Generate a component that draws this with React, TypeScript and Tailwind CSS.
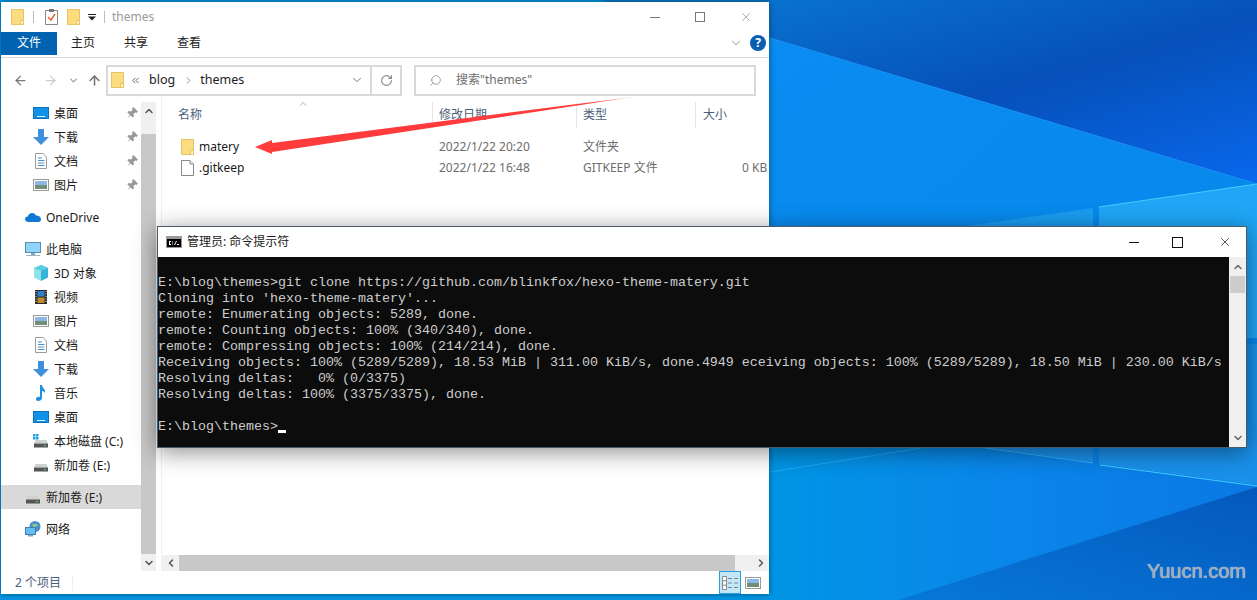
import { ArrowLeft, ArrowRight, ArrowUp, ChevronDown, ChevronLeft, ChevronRight, ChevronUp, ChevronsLeft, Pin, RotateCw, Search, X } from "lucide-react";
import type { ReactNode } from "react";

const FolderIcon = () => (
  <svg width="13" height="16" viewBox="0 0 13 16" className="shrink-0">
    <path d="M0.5 0.5H12.5V15.5H0.5Z" fill="#fbdc7e" stroke="#e5c365" />
    <path d="M9.5 11.5H12.5V15.5H9.5Z" fill="#fff3c4" stroke="#e5c365" />
  </svg>
);

const FileIcon = () => (
  <svg width="13" height="16" viewBox="0 0 13 16" className="shrink-0">
    <path d="M0.5 0.5H9L12.5 4V15.5H0.5Z" fill="#fff" stroke="#8a8a8a" />
    <path d="M9 0.5V4H12.5" fill="#eee" stroke="#8a8a8a" />
  </svg>
);

const DesktopIcon = () => (
  <svg width="16" height="16" viewBox="0 0 16 16">
    <rect x="0.5" y="2.5" width="15" height="11" fill="#0f93e8" stroke="#0f6fb8" />
    <rect x="4" y="11" width="8" height="1" fill="#d8f0ff" />
  </svg>
);

const DownloadIcon = () => (
  <svg width="16" height="16" viewBox="0 0 16 16">
    <path d="M5 0H11V8H16L8 16L0 8H5Z" fill="#3f8fdc" />
  </svg>
);

const DocIcon = () => (
  <svg width="16" height="16" viewBox="0 0 16 16">
    <path d="M2.5 0.5H10L13.5 4V15.5H2.5Z" fill="#fff" stroke="#999" />
    <path d="M5 5H9M5 7.5H11.5M5 10H11.5M5 12.5H11.5" stroke="#4a90c8" />
  </svg>
);

const PictureIcon = () => (
  <svg width="16" height="16" viewBox="0 0 16 16">
    <rect x="0.5" y="2.5" width="15" height="11" fill="#fff" stroke="#9a9a9a" />
    <rect x="2" y="4" width="12" height="4" fill="#8ab8e8" />
    <rect x="2" y="8" width="12" height="4" fill="#6f8f78" />
  </svg>
);

const CloudIcon = () => (
  <svg width="16" height="16" viewBox="0 0 16 16">
    <path d="M4 13C1 13 0 11.5 0 10C0 8.5 1 7.5 2.8 7.5C3.4 5.5 5 4 7.2 4C9 4 10.4 5 11 6.5C13.8 6.5 16 8 16 10.5C16 12 15 13 13.5 13Z" fill="#0f78d4" />
  </svg>
);

const PcIcon = () => (
  <svg width="16" height="16" viewBox="0 0 16 16">
    <rect x="0.5" y="1.5" width="15" height="10" fill="#8fd4f8" stroke="#5a8fb0" />
    <rect x="6" y="12" width="4" height="2" fill="#8aa8bc" />
    <rect x="1" y="14" width="14" height="1" fill="#9ab4c4" />
  </svg>
);

const CubeIcon = () => (
  <svg width="16" height="16" viewBox="0 0 16 16">
    <path d="M8 0L15 3V12.5L8 16Z" fill="#39b4d8" />
    <path d="M8 0L1 3V12.5L8 16Z" fill="#8fe4ec" />
    <path d="M8 0L15 3L8 6L1 3Z" fill="#5ccce0" />
  </svg>
);

const FilmIcon = () => (
  <svg width="16" height="16" viewBox="0 0 16 16">
    <rect x="2" y="1" width="12" height="14" fill="#2a2a2a" />
    <rect x="4.5" y="2" width="7" height="5.5" fill="#2f7fd0" />
    <rect x="4.5" y="8.5" width="7" height="5.5" fill="#c08a2f" />
    <path d="M3 2V14M13 2V14" stroke="#ddd" strokeDasharray="1 1.5" />
  </svg>
);

const MusicIcon = () => (
  <svg width="16" height="16" viewBox="0 0 16 16">
    <path d="M7 0H9C9 3 13 4 12 8C11 6.5 10 6 9 6V13C9 15 7 16 5 16C3.500 16 3 15 3 14C3 12.500 5 11.500 7 12Z" fill="#1f8fe0" />
  </svg>
);

const DriveIcon = ({ win = false }: { win?: boolean }) => (
  <svg width="16" height="16" viewBox="0 0 16 16">
    {win && <path d="M0 1H2.500V3.500H0ZM3 1H5.500V3.500H3ZM0 4H2.500V6.500H0ZM3 4H5.500V6.500H3Z" fill="#1ba1e2" />}
    <path d="M2.500 7H13.500L15 10.500H1Z" fill="#d0d0d0" />
    <rect x="1" y="10.500" width="14" height="4" fill="#555" />
    <rect x="11" y="12" width="2" height="1" fill="#4fe04f" />
  </svg>
);

const NetworkIcon = () => (
  <svg width="16" height="16" viewBox="0 0 16 16">
    <circle cx="10" cy="5.500" r="5.500" fill="#4a90c8" />
    <path d="M7 2.500C9 4 11 2 13 4C12 6 10 5 9 8Z" fill="#8fc88a" />
    <rect x="0.500" y="6.500" width="10" height="7" fill="#64bdf2" stroke="#3a7fb0" />
    <rect x="3" y="14" width="5" height="1.500" fill="#8aa8bc" />
  </svg>
);

const CmdIcon = () => (
  <svg width="16" height="12" viewBox="0 0 16 12" className="shrink-0">
    <rect x="0" y="0" width="16" height="12" fill="#9a9a9a" />
    <rect x="1" y="3" width="14" height="8" fill="#000" />
    <path d="M3 5H5V6H3ZM3 6H4V8H3ZM3 8H5V9H3ZM6 5.500H7V6.500H6ZM6 7.500H7V8.500H6ZM8 9L10 5H11L9 9ZM11 8H13V9H11Z" fill="#fff" />
  </svg>
);

const navGroups: { label: string; icon: ReactNode; indent: number; pin?: boolean; selected?: boolean }[][] = [
  [
    { label: "桌面", icon: <DesktopIcon />, indent: 32, pin: true },
    { label: "下载", icon: <DownloadIcon />, indent: 32, pin: true },
    { label: "文档", icon: <DocIcon />, indent: 32, pin: true },
    { label: "图片", icon: <PictureIcon />, indent: 32, pin: true },
  ],
  [{ label: "OneDrive", icon: <CloudIcon />, indent: 24 }],
  [
    { label: "此电脑", icon: <PcIcon />, indent: 24 },
    { label: "3D 对象", icon: <CubeIcon />, indent: 32 },
    { label: "视频", icon: <FilmIcon />, indent: 32 },
    { label: "图片", icon: <PictureIcon />, indent: 32 },
    { label: "文档", icon: <DocIcon />, indent: 32 },
    { label: "下载", icon: <DownloadIcon />, indent: 32 },
    { label: "音乐", icon: <MusicIcon />, indent: 32 },
    { label: "桌面", icon: <DesktopIcon />, indent: 32 },
    { label: "本地磁盘 (C:)", icon: <DriveIcon win />, indent: 32 },
    { label: "新加卷 (E:)", icon: <DriveIcon />, indent: 32 },
  ],
  [{ label: "新加卷 (E:)", icon: <DriveIcon />, indent: 24, selected: true }],
  [{ label: "网络", icon: <NetworkIcon />, indent: 24 }],
];

const consoleLines = [
  "E:\\blog\\themes>git clone https://github.com/blinkfox/hexo-theme-matery.git",
  "Cloning into 'hexo-theme-matery'...",
  "remote: Enumerating objects: 5289, done.",
  "remote: Counting objects: 100% (340/340), done.",
  "remote: Compressing objects: 100% (214/214), done.",
  "Receiving objects: 100% (5289/5289), 18.53 MiB | 311.00 KiB/s, done.4949 eceiving objects: 100% (5289/5289), 18.50 MiB | 230.00 KiB/s",
  "Resolving deltas:   0% (0/3375)",
  "Resolving deltas: 100% (3375/3375), done.",
  "",
];

const Wallpaper = () => (
  <svg className="absolute inset-0" width="1257" height="600" viewBox="0 0 1257 600">
    <defs>
      <linearGradient id="base" x1="0" y1="0" x2="1" y2="0">
        <stop offset="0.6" stopColor="#0096e4" />
        <stop offset="0.8" stopColor="#0a86ea" />
        <stop offset="1" stopColor="#0a78e4" />
      </linearGradient>
      <linearGradient id="sky" x1="0" y1="0" x2="1" y2="1">
        <stop offset="0" stopColor="#0a7cd4" />
        <stop offset="0.55" stopColor="#0650ba" />
        <stop offset="1" stopColor="#0968ec" />
      </linearGradient>
      <linearGradient id="floor" x1="0" y1="1" x2="1" y2="0">
        <stop offset="0" stopColor="#0678d8" />
        <stop offset="1" stopColor="#0558bc" />
      </linearGradient>
      <linearGradient id="mid" x1="0" y1="0" x2="1" y2="1">
        <stop offset="0" stopColor="#0a8cf2" />
        <stop offset="1" stopColor="#0686e8" />
      </linearGradient>
    </defs>
    <rect width="1257" height="600" fill="url(#base)" />
    <path d="M770 38L1257 184V480L1000 445H770Z" fill="url(#mid)" />
    <path d="M600 0H1257V184L770 38L600 0Z" fill="url(#sky)" />
    <path d="M0 0H770V38L600 0Z" fill="#0a78c8" />
    <path d="M967 226L1093 208V230H967Z" fill="#1a9cf0" />
    <path d="M1099 207L1257 184V338H1099Z" fill="#1fa6f6" />
    <path d="M1099 344H1257V485L1099 464Z" fill="#1a90ea" />
    <path d="M985 448H1093V462Z" fill="#1a90ea" />
    <path d="M1257 487V600H898Z" fill="url(#floor)" />
    <path d="M770 38L1257 184" stroke="#1a92f4" strokeWidth="1" />
    <path d="M1099 207L1257 184" stroke="#40d0ff" strokeWidth="1" />
    <path d="M1100 465L1257 486" stroke="#40d0ff" strokeWidth="1" />
    <path d="M985 448L1093 463" stroke="#30b0f8" />
    <path d="M770 472L921 448" stroke="#20a8f0" />
  </svg>
);

const Arrows = () => (
  <svg className="absolute inset-0 pointer-events-none" width="1257" height="600" viewBox="0 0 1257 600">
    <defs>
      <linearGradient id="fade1" x1="255" y1="0" x2="640" y2="0" gradientUnits="userSpaceOnUse">
        <stop offset="0.85" stopColor="#ff3b3b" />
        <stop offset="1" stopColor="#ff3b3b" stopOpacity="0.15" />
      </linearGradient>
      <linearGradient id="fade2" x1="784" y1="0" x2="1020" y2="0" gradientUnits="userSpaceOnUse">
        <stop offset="0.7" stopColor="#ff3b3b" />
        <stop offset="1" stopColor="#ff3b3b" stopOpacity="0.15" />
      </linearGradient>
    </defs>
    <path d="M255 147L272 140L272 143L640 96L272 152L272 154Z" fill="url(#fade1)" />
    <path d="M784 286L801 278L801 282L1020 296L801 291L801 294Z" fill="url(#fade2)" />
  </svg>
);

const App = () => {
  return (
    <div className="relative w-[1257px] h-[600px] overflow-hidden font-['Noto_Sans','Noto_Sans_CJK_SC',sans-serif] text-[12px]">
      <Wallpaper />

      {/* Explorer window */}
      <div className="absolute left-[1px] top-[2px] w-[768px] h-[592px] flex flex-col bg-white shadow-[0_0_6px_rgba(0,0,0,0.45)]">
        <div className="flex items-center h-[30px] shrink-0 pl-[10px]">
          <FolderIcon />
          <div className="w-px h-3 bg-[#bbb] ml-[9px] mr-[11px]" />
          <svg width="13" height="16" viewBox="0 0 13 16">
            <path d="M0.500 1.500H12.500V15.500H0.500Z" fill="#fff" stroke="#888" />
            <rect x="4" y="0" width="5" height="3" fill="#777" />
            <path d="M3 8L6 11L10 5" fill="none" stroke="#e8602c" strokeWidth="1.500" />
          </svg>
          <div className="ml-[9px]"><FolderIcon /></div>
          <svg width="9" height="7" viewBox="0 0 9 7" className="ml-[8px]">
            <path d="M0 0H8V1H0ZM0 2.500H8L4 6.500Z" fill="#222" />
          </svg>
          <div className="w-px h-3 bg-[#bbb] ml-[7px] mr-[7px]" />
          <span className="text-[#999]">themes</span>
          <div className="ml-auto flex items-center">
            <div className="w-[10px] h-px bg-[#777] mr-[35px]" />
            <div className="w-[10px] h-[10px] border border-[#777] mr-[34px]" />
            <X size={14} strokeWidth={1} className="mr-[16px] text-[#777]" />
          </div>
        </div>

        <div className="flex items-center h-[26px] shrink-0 border-b border-[#d9d9d9] pb-[3px]">
          <div className="w-[56px] h-[23px] flex items-center justify-center bg-[#0063b1] text-white">文件</div>
          <span className="ml-[14px] text-[#222]">主页</span>
          <span className="ml-[29px] text-[#222]">共享</span>
          <span className="ml-[29px] text-[#222]">查看</span>
          <ChevronDown size={14} strokeWidth={1.500} className="ml-auto mr-[7px] text-[#888]" />
          <div className="w-[16px] h-[16px] mr-[3px] rounded-full bg-[#0a5fb0] text-white flex items-center justify-center text-[12px] font-bold">?</div>
        </div>

        <div className="flex items-center h-[38px] shrink-0 pt-[6px]">
          <ArrowLeft size={15} strokeWidth={2} className="ml-[12px] text-[#777]" />
          <ArrowRight size={15} strokeWidth={2} className="ml-[15px] text-[#ccc]" />
          <ChevronDown size={11} strokeWidth={2.500} className="ml-[10px] text-[#999]" />
          <ArrowUp size={15} strokeWidth={2.500} className="ml-[8px] text-[#777]" />
          <div className="ml-[4px] w-[296px] h-[31px] flex items-center border-2 border-[#d9d9d9] text-[#222] pl-[3px]">
            <FolderIcon />
            <ChevronsLeft size={11} strokeWidth={1.500} className="ml-[6px]" />
            <span className="ml-[8px] text-[12.500px]">blog</span>
            <ChevronRight size={11} strokeWidth={2} className="ml-[8px] text-[#888]" />
            <span className="ml-[6px] text-[12.500px]">themes</span>
            <ChevronDown size={14} strokeWidth={1.500} className="ml-[106px] text-[#666]" />
            <div className="ml-[6px] h-full border-l-2 border-[#d9d9d9] flex-1 flex items-center justify-center">
              <RotateCw size={13} className="text-[#888]" />
            </div>
          </div>
          <div className="ml-[12px] w-[342px] h-[31px] flex items-center border-2 border-[#d9d9d9] text-[#6d6d6d] pl-[13px]">
            <Search size={13} strokeWidth={1.300} className="-scale-x-100 text-[#8a7a8a]" />
            <span className="ml-[14px]">搜索"themes"</span>
          </div>
        </div>

        <div className="flex flex-1 min-h-0">
          <div className="w-[140px] shrink-0 flex flex-col gap-2 pt-[5px] text-[#1a1a1a]">
            {navGroups.map((group, i) => (
              <div key={i} className="flex flex-col">
                {group.map((item, j) => (
                  <div key={j} className={`flex items-center h-6 ${item.selected ? "bg-[#d9d9d9]" : ""}`} style={{ paddingLeft: item.indent }}>
                    {item.icon}
                    <span className="ml-[5px] translate-y-px">{item.label}</span>
                    {item.pin && <Pin size={12} fill="#999" strokeWidth={1.500} className="ml-auto mr-[3px] rotate-45 text-[#999]" />}
                  </div>
                ))}
              </div>
            ))}
          </div>

          <div className="w-[15px] shrink-0 mt-[6px] flex flex-col bg-[#f0f0f0]">
            <div className="h-[32px] flex items-start justify-center pt-[3px]">
              <ChevronUp size={12} strokeWidth={3} className="text-[#555]" />
            </div>
            <div className="flex-1 bg-[#c8c8c8]" />
            <div className="h-[17px] flex items-center justify-center">
              <ChevronDown size={12} strokeWidth={3} className="text-[#555]" />
            </div>
          </div>

          <div className="flex-1 min-w-0 ml-[5px] flex flex-col border-l border-[#f0f0f0]">
            <div className="relative flex h-[26px] mt-[6px] shrink-0 text-[#4c607a]">
              <ChevronUp size={12} strokeWidth={1} className="absolute left-[135px] -top-[4px] text-[#666]" />
              <div className="w-[270px] flex items-center pl-[16px]">名称</div>
              <div className="w-[144px] flex items-center pl-[6px] border-l border-[#e5e5e5]">修改日期</div>
              <div className="w-[119px] flex items-center pl-[6px] border-l border-[#e5e5e5]">类型</div>
              <div className="flex-1 flex items-center pl-[7px] border-l border-[#e5e5e5]">大小</div>
            </div>
            <div className="flex flex-col mt-2 flex-1 text-[#6d6d6d] overflow-hidden">
              <div className="flex items-center h-[21px] whitespace-nowrap">
                <div className="w-[270px] flex items-center pl-[19px] text-[#1a1a1a] gap-[5px]"><FolderIcon />matery</div>
                <div className="w-[144px] pl-[7px]">2022/1/22 20:20</div>
                <div className="w-[119px] pl-[7px]">文件夹</div>
              </div>
              <div className="flex items-center h-[21px] whitespace-nowrap">
                <div className="w-[270px] flex items-center pl-[19px] text-[#1a1a1a] gap-[5px]"><FileIcon />.gitkeep</div>
                <div className="w-[144px] pl-[7px]">2022/1/22 16:48</div>
                <div className="w-[119px] pl-[7px]">GITKEEP 文件</div>
                <div className="flex-1 min-w-0 overflow-hidden pl-[47px]">0 KB</div>
              </div>
            </div>
            <div className="flex h-4 shrink-0 bg-[#f0f0f0]">
              <div className="w-[17px] flex items-center justify-center"><ChevronLeft size={12} strokeWidth={3} className="text-[#555]" /></div>
              <div className="flex-1 bg-[#c8c8c8]" />
              <div className="w-[34px] flex items-center justify-end pr-[2px]"><ChevronRight size={12} strokeWidth={3} className="text-[#555]" /></div>
            </div>
          </div>
        </div>

        <div className="flex items-center h-[23px] shrink-0 pl-[14px] text-[#4c607a]">
          <span>2 个项目</span>
          <div className="w-px h-4 bg-[#eee] ml-[11px]" />
          <div className="ml-auto w-[22px] h-full flex items-center justify-center bg-[#c5e6f7] border border-[#27a0dc]">
            <svg width="16" height="14" viewBox="0 0 16 14">
              <path d="M0.500 0.500H4.500V13.500H0.500ZM0.500 4.800H4.500M0.500 9.200H4.500" fill="#fff" stroke="#888" />
              <path d="M6 2.500H10M12 2.500H16M6 7H10M12 7H16M6 11.500H10M12 11.500H16" stroke="#7a8a98" />
            </svg>
          </div>
          <div className="ml-[4px] mr-[8px]"><PictureIcon /></div>
        </div>
      </div>

      <Arrows />

      {/* Console window */}
      <div className="absolute left-[157px] top-[226px] w-[1090px] h-[222px] flex flex-col bg-white border border-[#4a5a68] shadow-[0_4px_22px_rgba(0,0,0,0.45)]">
        <div className="flex items-center h-[30px] shrink-0 pl-[8px] text-[#1a1a1a]">
          <CmdIcon />
          <span className="ml-[5px]">管理员: 命令提示符</span>
          <div className="ml-auto flex items-center">
            <div className="w-[10px] h-px bg-[#111] mr-[33px]" />
            <div className="w-[11px] h-[11px] border border-[#111] mr-[35px]" />
            <X size={14} strokeWidth={1.200} className="mr-[14px] text-[#111]" />
          </div>
        </div>
        <div className="flex flex-1 min-h-0">
          <div className="flex-1 min-w-0 bg-[#0c0c0c] text-[#cccccc] pt-[18px] overflow-hidden whitespace-pre font-['Liberation_Mono','Noto_Sans_CJK_SC',monospace] text-[13.333px] leading-[16px]">
            {consoleLines.map((line, i) => (
              <div key={i} className="h-4">{line}</div>
            ))}
            <div className="flex h-4">
              <span>E:\blog\themes&gt;</span>
              <div className="w-2 h-[3px] mt-[11px] bg-white" />
            </div>
          </div>
          <div className="w-[17px] shrink-0 flex flex-col bg-[#f0f0f0]">
            <div className="h-[19px] flex items-center justify-center"><ChevronUp size={12} strokeWidth={3} className="text-[#666]" /></div>
            <div className="h-[17px] mx-px bg-[#cdcdcd]" />
            <div className="flex-1" />
            <div className="h-[19px] flex items-center justify-center"><ChevronDown size={12} strokeWidth={3} className="text-[#666]" /></div>
          </div>
        </div>
      </div>

      <div className="absolute left-[1147px] top-[559px] font-['Liberation_Sans',sans-serif] text-[20px] leading-[24px] text-[#a0aab2] [text-shadow:0_0_1px_#ffffff]">Yuucn.com</div>
    </div>
  );
};

export default App;
